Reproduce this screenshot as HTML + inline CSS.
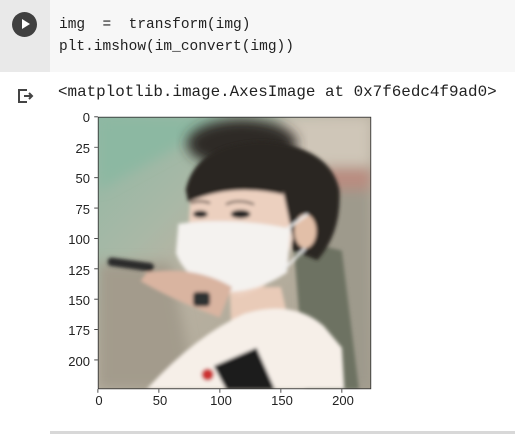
<!DOCTYPE html>
<html><head><style>
body{margin:0;width:515px;height:437px;background:#fff;position:relative;overflow:hidden;font-family:"Liberation Mono",monospace}
.gut{position:absolute;left:0;top:0;width:50px;height:72px;background:#e9e9e9}
.code{position:absolute;left:50px;top:0;width:465px;height:72px;background:#f7f7f7}
.c{position:absolute;left:59px;font-size:14.5px;color:#222;white-space:pre}
.run{position:absolute;left:12px;top:12px;width:25px;height:25px;border-radius:50%;background:#404040}
.run:after{content:"";position:absolute;left:10px;top:7px;border-left:8px solid #fff;border-top:5.5px solid transparent;border-bottom:5.5px solid transparent}
.out{position:absolute;left:58px;top:83px;font-size:15.9px;color:#222;white-space:pre}
.yl{position:absolute;right:425px;font-family:"Liberation Sans",sans-serif;font-size:13px;color:#222;text-align:right}
.xl{position:absolute;top:393px;font-family:"Liberation Sans",sans-serif;font-size:13px;color:#222;transform:translateX(-50%)}
.bot{position:absolute;left:50px;top:431px;width:465px;height:3px;background:#d8d8d8}
</style></head><body>
<div class="gut"></div><div class="code"></div>
<div class="run"></div>
<div class="c" style="top:17px">img  =  transform(img)</div>
<div class="c" style="top:39px">plt.imshow(im_convert(img))</div>
<svg style="position:absolute;left:17px;top:88px" width="18" height="16" viewBox="0 0 18 16"><path d="M10 2H2v12h8" fill="none" stroke="#444" stroke-width="2"/><path d="M7 8h8M12 5l3 3-3 3" fill="none" stroke="#444" stroke-width="2"/></svg>
<div class="out">&lt;matplotlib.image.AxesImage at 0x7f6edc4f9ad0&gt;</div>
<svg style="position:absolute;left:93px;top:112px" width="283" height="282" viewBox="-4 -4 232 232" preserveAspectRatio="none">
<defs>
<linearGradient id="bg" x1="0" y1="0" x2="1" y2="1"><stop offset="0" stop-color="#8fb8a4"/><stop offset="0.3" stop-color="#a9b8a6"/><stop offset="0.45" stop-color="#b9b2a2"/><stop offset="1" stop-color="#a8a090"/></linearGradient>
<filter id="bl"><feGaussianBlur stdDeviation="1.5"/></filter>
<filter id="bl2"><feGaussianBlur stdDeviation="5"/></filter>
<clipPath id="cp"><rect width="224" height="224"/></clipPath>
</defs>
<g clip-path="url(#cp)">
<rect width="224" height="224" fill="url(#bg)"/>
<g filter="url(#bl2)">
<polygon points="0,0 110,0 0,60" fill="#8cb8a2"/>
<rect x="150" y="0" width="74" height="40" fill="#cfc6b8"/>
<rect x="185" y="42" width="39" height="22" fill="#b98c80"/>
<rect x="170" y="60" width="54" height="164" fill="#9e9a8c"/>
<polygon points="0,120 60,120 80,224 0,224" fill="#a39b8c"/>
</g>
<ellipse cx="118" cy="22" rx="45" ry="20" fill="#2e2a28" filter="url(#bl2)"/>
<path d="M160 100 L200 110 L214 224 L170 224 Z" fill="#6d7262" filter="url(#bl)"/>
<g filter="url(#bl)">
<path d="M72 60 Q80 22 135 20 Q190 24 198 60 Q200 95 180 118 L160 110 L150 60 L75 68 Z" fill="#2a2624"/>
<path d="M108 140 L150 140 L158 175 L110 185 Z" fill="#e9cbb8"/>
<path d="M76 62 Q110 48 152 62 L160 100 Q150 140 116 148 Q80 140 74 100 Z" fill="#ecd0bf"/>
<ellipse cx="170" cy="94" rx="9" ry="14" fill="#e2bfa8"/>
<path d="M72 60 Q110 44 150 56 L152 64 Q110 54 74 70 Z" fill="#2a2624"/>
<path d="M76 71 Q84 68 92 71 M105 72 Q115 67 128 72" stroke="#3a2e28" stroke-width="1.5" fill="none"/>
<ellipse cx="84" cy="80" rx="6" ry="3" fill="#222"/>
<ellipse cx="117" cy="80" rx="8" ry="3.5" fill="#222"/>
<path d="M66 88 Q110 82 158 92 L155 128 Q125 148 95 143 Q70 130 64 112 Z" fill="#f4f2ef"/>
<path d="M155 92 L172 80 M152 126 L170 108" stroke="#eee" stroke-width="2"/>
<path d="M40 128 Q80 122 110 140 L100 165 Q60 150 35 135 Z" fill="#d9b4a0"/>
<rect x="8" y="118" width="38" height="7" rx="3" fill="#2a2a2a" transform="rotate(8 27 121)"/>
<rect x="78" y="144" width="14" height="12" rx="3" fill="#2d3030"/>
<path d="M40 224 Q80 180 120 162 Q160 150 185 172 L200 190 L202 224 Z" fill="#f6efe8"/>
<path d="M95 205 L130 190 L145 224 L105 224 Z" fill="#1d1d1f"/>
<circle cx="90" cy="212" r="5" fill="#c33"/>
</g>
</g>
<rect x="0.3" y="0.3" width="223.4" height="223.4" fill="none" stroke="#333" stroke-width="0.7"/>
<path d="M0 0h-3M0 25h-3M0 50h-3M0 75h-3M0 100h-3M0 125h-3M0 150h-3M0 175h-3M0 200h-3M0 224v3M50 224v3M100 224v3M150 224v3M200 224v3" stroke="#333" stroke-width="0.7"/>
</svg>
<div class="yl" style="top:110px">0</div>
<div class="yl" style="top:141px">25</div>
<div class="yl" style="top:171px">50</div>
<div class="yl" style="top:202px">75</div>
<div class="yl" style="top:232px">100</div>
<div class="yl" style="top:263px">125</div>
<div class="yl" style="top:293px">150</div>
<div class="yl" style="top:323px">175</div>
<div class="yl" style="top:354px">200</div>
<div class="xl" style="left:99px">0</div>
<div class="xl" style="left:160px">50</div>
<div class="xl" style="left:221px">100</div>
<div class="xl" style="left:282px">150</div>
<div class="xl" style="left:343px">200</div>
<div class="bot"></div>
</body></html>
